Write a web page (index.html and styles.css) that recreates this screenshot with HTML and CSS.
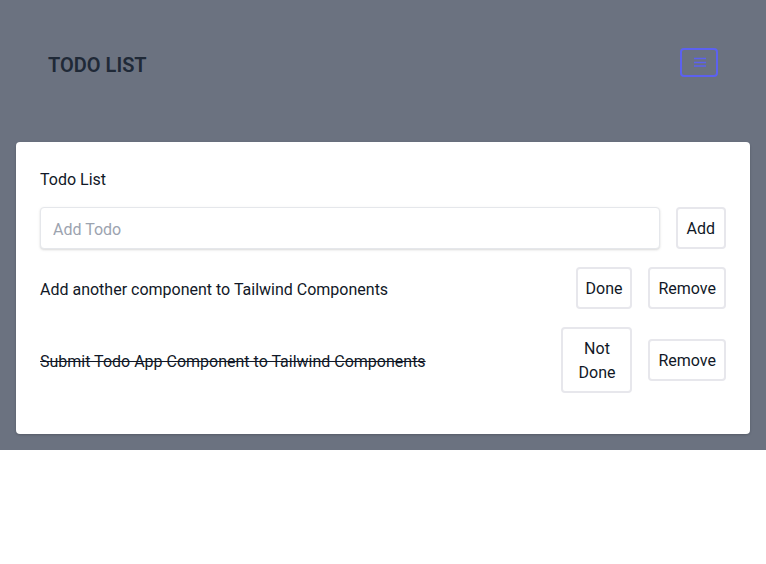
FILE: index.html
```html
<!DOCTYPE html>
<html>
<head>
<meta charset="utf-8">
<title>Todo List</title>
<link rel="stylesheet" href="styles.css">
</head>
<body>
<div class="page">
  <header class="header">
    <h2 class="brand">TODO LIST</h2>
    <button class="menu-btn" aria-label="Menu">
      <svg width="14" height="12" viewBox="0 0 14 12" class="menu-icon">
        <path d="M1 1.5h12M1 5.5h12M1 9h12" stroke="#5c61f0" stroke-width="1.3" fill="none"/>
      </svg>
    </button>
  </header>
  <div class="card">
    <h1 class="card-title">Todo List</h1>
    <div class="add-row">
      <input class="todo-input" placeholder="Add Todo">
      <button class="btn btn-add">Add</button>
    </div>
    <div class="todo todo-first">
      <p class="todo-text">Add another component to Tailwind Components</p>
      <button class="btn btn-left">Done</button>
      <button class="btn">Remove</button>
    </div>
    <div class="todo todo-second">
      <p class="todo-text done">Submit Todo App Component to Tailwind Components</p>
      <button class="btn btn-left btn-notdone">Not Done</button>
      <button class="btn">Remove</button>
    </div>
  </div>
</div>
</body>
</html>
```
FILE: styles.css
```css
* { box-sizing: border-box; }
body {
  margin: 0;
  font-family: Roboto, "Liberation Sans", sans-serif;
  font-size: 16px;
  line-height: 1.5;
  color: #111827;
  background: #ffffff;
}
.page {
  background: #6b7280;
  padding-bottom: 16px;
}
.header {
  display: flex;
  justify-content: space-between;
  align-items: flex-start;
  height: 126px;
  padding: 48px 48px 0 48px;
}
.brand {
  margin: 3px 0 0 0;
  font-size: 20px;
  line-height: 28px;
  font-weight: 600;
  color: #1f2937;
}
.menu-btn {
  width: 38px;
  height: 29px;
  margin: 0;
  padding: 0;
  border: 2px solid #5c61f0;
  border-radius: 4px;
  background: transparent;
  display: flex;
  align-items: center;
  justify-content: center;
}
.menu-icon { display: block; margin-top: 1px; margin-left: 1px; }
.card {
  margin: 16px 16px 0 16px;
  background: #ffffff;
  border-radius: 4px;
  box-shadow: 0 1px 3px rgba(0,0,0,0.12), 0 1px 2px rgba(0,0,0,0.08);
  padding: 25px 24px 41px 24px;
}
.card-title {
  margin: 0 0 -1px 0;
  padding-top: 1px;
  font-size: 16px;
  line-height: 24px;
  font-weight: 400;
  color: #111827;
}
.add-row {
  display: flex;
  margin-top: 16px;
}
.todo-input {
  flex: 1;
  min-width: 0;
  height: 42px;
  margin-right: 16px;
  padding: 9px 12px 7px 12px;
  border: 1px solid #e5e7eb;
  border-radius: 4px;
  box-shadow: 0 1px 3px rgba(0,0,0,0.1), 0 1px 2px rgba(0,0,0,0.06);
  font-family: inherit;
  font-size: 16px;
  line-height: 24px;
  color: #374151;
  outline: none;
}
.todo-input::placeholder { color: #9ca3af; }
.btn {
  flex-shrink: 0;
  margin: 0;
  padding: 8px 8px 6px 8px;
  border: 2px solid #e7e7ec;
  border-radius: 4px;
  background: #ffffff;
  font-family: inherit;
  font-size: 16px;
  line-height: 24px;
  color: #111827;
}
.btn-add { padding-left: 9px; padding-right: 9px; }
.btn-left { margin-left: 16px; margin-right: 16px; }
.btn-notdone { width: 71px; }
.todo {
  display: flex;
  align-items: center;
}
.todo-first { margin-top: 18px; }
.todo-second { margin-top: 18px; }
.todo-text {
  flex: 1;
  margin: 0;
  padding-top: 4px;
  color: #111827;
}
.todo-text.done { text-decoration: line-through; }
```
